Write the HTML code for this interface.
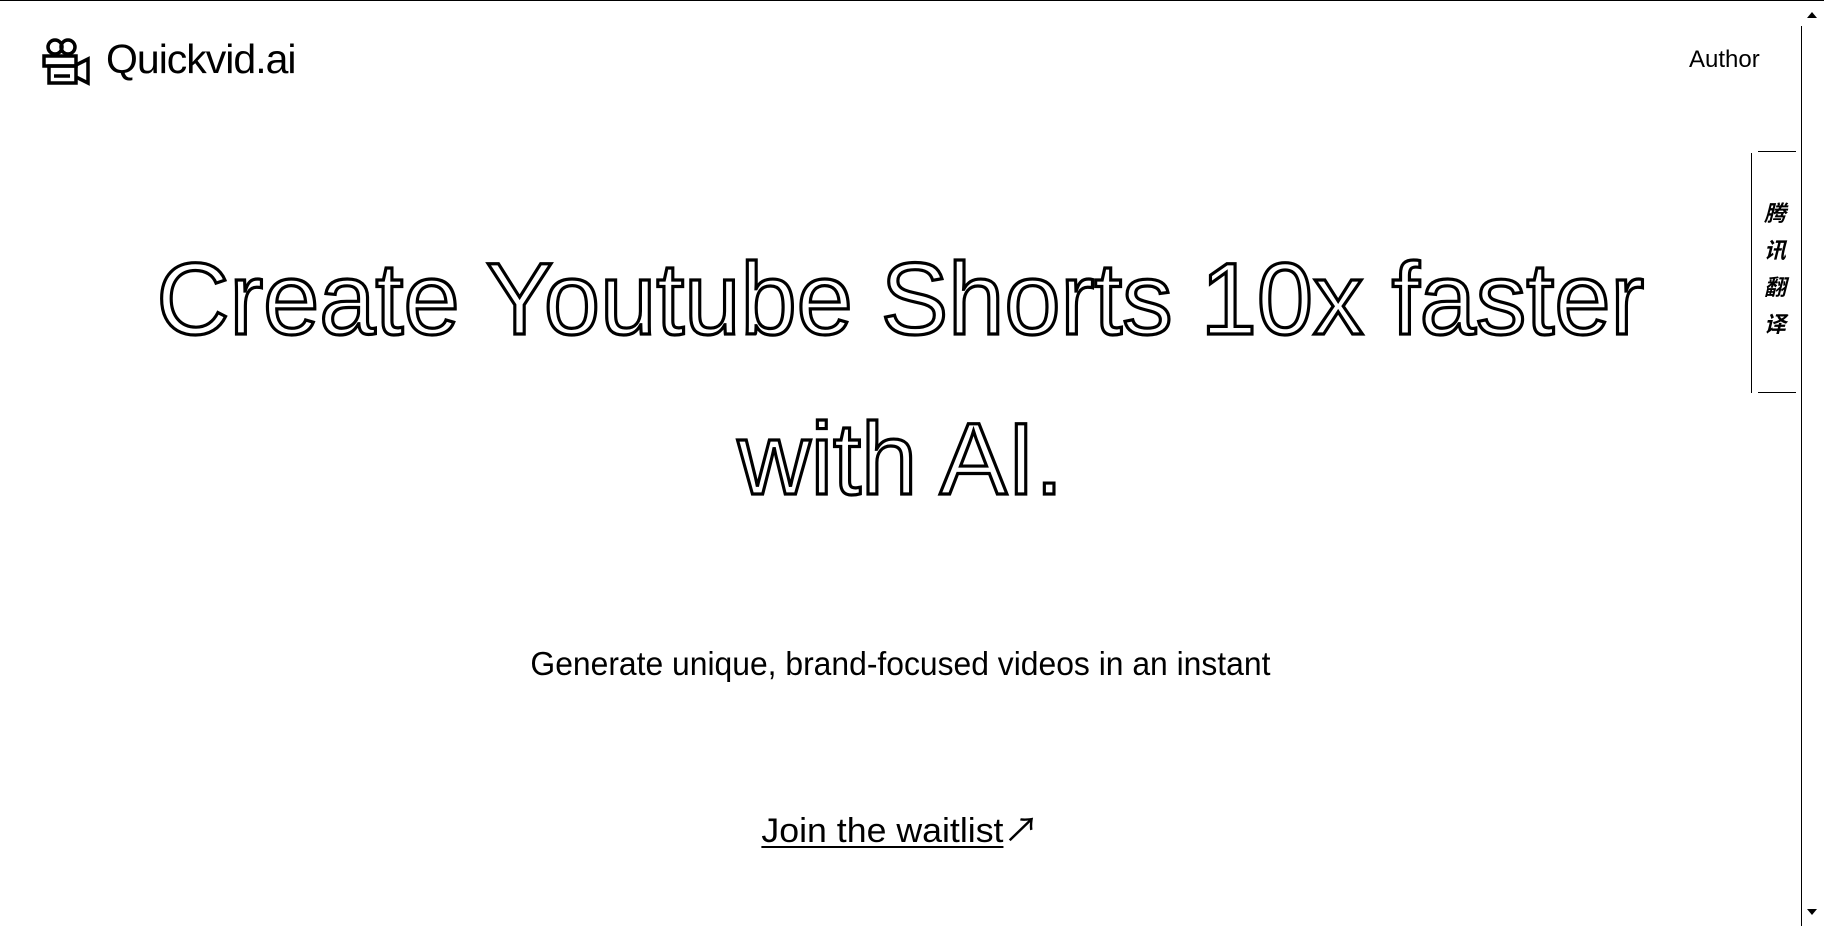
<!DOCTYPE html>
<html><head><meta charset="utf-8"><style>
html,body{margin:0;padding:0;background:#fff;}
body{width:1824px;height:926px;position:relative;overflow:hidden;font-family:"Liberation Sans","Noto Sans CJK SC",sans-serif;color:#000;}
.topb{position:absolute;left:0;top:0;width:1824px;height:1px;background:#000;}
.logo{position:absolute;left:42px;top:35px;}
.brand{position:absolute;left:106px;top:36px;font-size:41px;letter-spacing:-1px;}
.author{position:absolute;left:1689px;top:46px;font-size:24px;}
.h{position:absolute;left:0;width:1800px;text-align:center;font-size:102px;color:#fff;-webkit-text-stroke:3.2px #000;line-height:1;}
.h span{display:inline-block;transform:scaleX(.99);white-space:nowrap;}
.sub{position:absolute;left:0;width:1800px;text-align:center;top:645px;font-size:33px;}
.sub span{display:inline-block;transform:scaleX(.965);white-space:nowrap;}
.link{position:absolute;left:0;width:1800px;text-align:center;top:803px;font-size:34px;}
.link span{display:inline-block;transform:scaleX(1.05);white-space:nowrap;}
.link u{text-decoration-thickness:2px;text-underline-offset:4px;}
.sb{position:absolute;left:1801px;top:26px;width:1px;height:900px;background:#000;}
.tab{position:absolute;left:1751px;top:153px;width:1px;height:240px;background:#000;}
.tabt{position:absolute;left:1758px;top:151px;width:38px;height:1px;background:#000;}
.tabb{position:absolute;left:1758px;top:392px;width:38px;height:1px;background:#000;}
.cn{position:absolute;left:1764px;font-size:22px;font-style:italic;font-weight:bold;}
</style></head><body>
<div class="topb"></div>
<svg class="logo" width="50" height="52" viewBox="0 0 50 52" fill="none" stroke="#000" stroke-width="3.5">
<circle cx="13" cy="12" r="7"/>
<circle cx="26" cy="12" r="7"/>
<rect x="2" y="21" width="32" height="10"/>
<rect x="7" y="31" width="27" height="17"/>
<path d="M12 41 H28"/>
<path d="M34 30 L46 24 V48 L34 42"/>
</svg>
<div class="brand">Quickvid.ai</div>
<div class="author">Author</div>
<div class="h" style="top:248px"><span>Create Youtube Shorts 10x faster</span></div>
<div class="h" style="top:408px"><span>with AI.</span></div>
<div class="sub"><span>Generate unique, brand-focused videos in an instant</span></div>
<div class="link"><span><u>Join the waitlist</u>↗</span></div>
<div class="sb"></div>
<svg style="position:absolute;left:1804px;top:8px" width="16" height="12"><path d="M3 10 L8 4 L13 10Z" fill="#000"/></svg>
<svg style="position:absolute;left:1804px;top:906px" width="16" height="12"><path d="M3 3 L8 9 L13 3Z" fill="#000"/></svg>
<div class="tab"></div><div class="tabt"></div><div class="tabb"></div>
<div class="cn" style="top:196px">腾</div>
<div class="cn" style="top:233px">讯</div>
<div class="cn" style="top:270px">翻</div>
<div class="cn" style="top:307px">译</div>
</body></html>
